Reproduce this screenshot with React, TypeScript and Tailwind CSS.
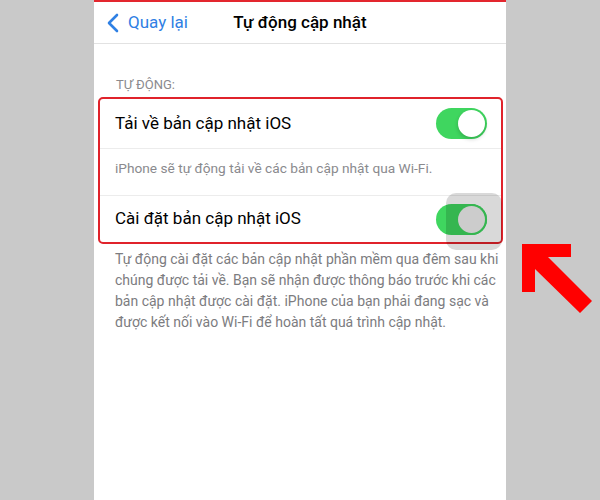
import React from "react"

const Toggle = ({ pressed = false }: { pressed?: boolean }) => (
  <div className="relative h-[31px] w-[51px] shrink-0 rounded-full bg-[#3fd65f]">
    <div
      className={
        pressed
          ? "absolute top-[2px] right-[2px] size-[27px] rounded-full bg-[#f0f0f0] ring-2 ring-[#3fd65f]"
          : "absolute top-[2px] right-[2px] size-[27px] rounded-full bg-white shadow-[0_2px_4px_rgba(0,0,0,0.2)]"
      }
    />
  </div>
)

const ArrowMark = () => (
  <svg width="72" height="74" viewBox="0 0 72 74">
    <polygon
      points="0,0 49,0 49,13 26,13 70,57 58,69 13,25 13,48 0,48"
      fill="#ff0000"
    />
  </svg>
)

const footerLines = [
  "Tự động cài đặt các bản cập nhật phần mềm qua đêm sau khi",
  "chúng được tải về. Bạn sẽ nhận được thông báo trước khi các",
  "bản cập nhật được cài đặt. iPhone của bạn phải đang sạc và",
  "được kết nối vào Wi-Fi để hoàn tất quá trình cập nhật.",
]

export default function App() {
  return (
    <div
      className="flex h-[500px] w-[600px] overflow-hidden bg-[#c9c9c9]"
      style={{ fontFamily: "Roboto, 'Noto Sans', sans-serif" }}
    >
      <div className="w-[94px] shrink-0" />

      {/* phone screen */}
      <div className="flex w-[412px] shrink-0 flex-col bg-white">
        <div className="h-[2px] bg-[#e3262e]" />
        <header className="relative flex h-[42px] items-center border-b border-[#e2e2e2]">
          <div className="flex items-center pl-[12px] text-[#2f80e4]">
            <svg width="14" height="20" viewBox="0 0 14 20" fill="none">
              <path
                d="M11 2 L3 10 L11 18"
                stroke="currentColor"
                strokeWidth="2.6"
                strokeLinecap="round"
                strokeLinejoin="round"
              />
            </svg>
            <span className="ml-[8px] text-[17px]">Quay lại</span>
          </div>
          <span className="absolute left-1/2 -translate-x-1/2 text-[17px] font-medium text-black">
            Tự động cập nhật
          </span>
        </header>

        <div className="pt-[33px] pr-[3px] pl-[4px]">
          <p className="pl-[18px] text-[13px] leading-[16px] text-[#8a8a8e]">TỰ ĐỘNG:</p>

          <div className="mt-[4px] rounded-[5px] border-2 border-[#e0232b]">
            <div className="flex h-[49px] items-center justify-between pr-[14px] pl-[15px]">
              <span className="text-[17px] text-black">Tải về bản cập nhật iOS</span>
              <Toggle />
            </div>
            <div className="h-[48px] border-y border-[#ececec] pt-[7px] pl-[15px]">
              <span className="text-[13.7px] leading-[16px] text-[#8a8a8e]">
                iPhone sẽ tự động tải về các bản cập nhật qua Wi-Fi.
              </span>
            </div>
            <div className="relative flex h-[46px] items-center justify-between pr-[14px] pl-[15px]">
              <span className="text-[17px] text-black">Cài đặt bản cập nhật iOS</span>
              <Toggle pressed />
              <div className="absolute top-[-3px] right-[-1px] h-[57px] w-[56px] rounded-[10px] bg-black/15" />
            </div>
          </div>

          <div className="mt-[5px] pl-[17px] text-[14px] leading-[21px] text-[#7c7c80]">
            {footerLines.map((line) => (
              <p key={line} className="whitespace-nowrap">
                {line}
              </p>
            ))}
          </div>
        </div>
      </div>

      <div className="flex-1 pt-[244px] pl-[16px]">
        <ArrowMark />
      </div>
    </div>
  )
}
